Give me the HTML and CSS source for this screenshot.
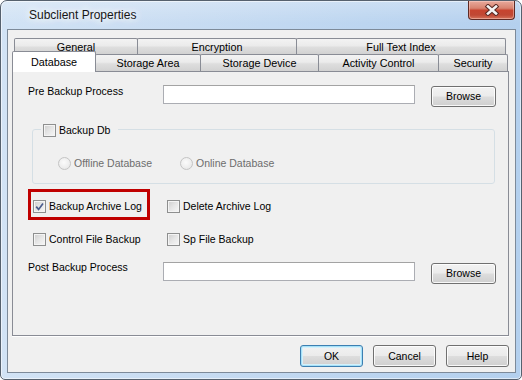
FILE: index.html
```html
<!DOCTYPE html>
<html>
<head>
<meta charset="utf-8">
<link rel="stylesheet" href="styles.css">
</head>
<body>
<div class="window">
  <div class="titlebar">
    <span class="title">Subclient Properties</span>
    <div class="close">
      <svg width="16" height="12" viewBox="0 0 16 12"><path d="M4 2.5 L12 9.5 M12 2.5 L4 9.5" stroke="#5b2a24" stroke-width="4.6" stroke-linecap="square" fill="none"/><path d="M4 2.5 L12 9.5 M12 2.5 L4 9.5" stroke="#f4f4f4" stroke-width="2.6" stroke-linecap="square" fill="none"/></svg>
    </div>
  </div>
  <div class="client">
    <div class="tabs">
      <div class="tabrow back">
        <div class="tab t-general">General</div>
        <div class="tab t-encryption">Encryption</div>
        <div class="tab t-fti">Full Text Index</div>
      </div>
      <div class="tabrow front">
        <div class="tab sel t-database">Database</div>
        <div class="tab t-sarea">Storage Area</div>
        <div class="tab t-sdevice">Storage Device</div>
        <div class="tab t-activity">Activity Control</div>
        <div class="tab t-security">Security</div>
      </div>
    </div>
    <div class="panel">
      <div class="row row1">
        <span class="lbl">Pre Backup Process</span>
        <span class="tb"></span>
        <span class="btn">Browse</span>
      </div>
      <div class="group">
        <div class="legend"><span class="cb"></span><span>Backup Db</span></div>
        <div class="radios">
          <div class="ritem"><span class="radio"></span><span>Offline Database</span></div>
          <div class="ritem"><span class="radio"></span><span>Online Database</span></div>
        </div>
      </div>
      <div class="cbrow rowa">
        <div class="citem highlight"><span class="cb"><svg width="9" height="9" viewBox="0 0 9 9"><path d="M1.2 4.6 L3.6 7.4 L8 1.4" stroke="#4b5d8e" stroke-width="1.7" fill="none"/></svg></span><span>Backup Archive Log</span></div>
        <div class="citem"><span class="cb"></span><span>Delete Archive Log</span></div>
      </div>
      <div class="cbrow rowb">
        <div class="citem"><span class="cb"></span><span>Control File Backup</span></div>
        <div class="citem"><span class="cb"></span><span>Sp File Backup</span></div>
      </div>
      <div class="row row2">
        <span class="lbl">Post Backup Process</span>
        <span class="tb"></span>
        <span class="btn">Browse</span>
      </div>
    </div>
    <div class="buttons">
      <span class="btn dlg default">OK</span>
      <span class="btn dlg">Cancel</span>
      <span class="btn dlg">Help</span>
    </div>
  </div>
</div>
</body>
</html>
```
FILE: styles.css
```css
html, body {
  margin: 0;
  padding: 0;
}
body {
  font-family: "Liberation Sans", Arial, sans-serif;
  font-size: 10.5px;
  color: #000;
  width: 522px;
  height: 380px;
  overflow: hidden;
}
.window {
  width: 522px;
  height: 380px;
  box-sizing: border-box;
  border: 1px solid #56616e;
  border-radius: 7px 7px 5px 5px;
  background: linear-gradient(to right, #d2e3f5 0%, #c8dcf2 35%, #bcd5f0 70%, #b4d0ee 100%);
  box-shadow: inset 0 0 0 1px rgba(255,255,255,0.55);
  display: flex;
  flex-direction: column;
  overflow: hidden;
}
.titlebar {
  height: 28px;
  flex: none;
  display: flex;
  align-items: center;
  padding-left: 28px;
  background: linear-gradient(to bottom, rgba(255,255,255,0.25), rgba(255,255,255,0) 80%);
}
.title {
  font-size: 12px;
  color: #161616;
  text-shadow: 0 0 6px #fff, 0 0 10px #fff, 0 0 14px #eaf3fc;
}
.close {
  margin-left: auto;
  margin-right: 6px;
  align-self: flex-start;
  width: 47px;
  height: 19px;
  box-sizing: border-box;
  border: 1px solid #5e2a24;
  border-top: none;
  border-radius: 0 0 4px 4px;
  background: linear-gradient(to bottom, #e9aa9c 0%, #d88370 40%, #c7442f 52%, #c04834 78%, #d5735b 100%);
  box-shadow: inset 0 0 0 1px rgba(255,220,210,0.45);
  display: flex;
  align-items: center;
  justify-content: center;
}
.client {
  flex: 1;
  margin: 0 5px 6px 6px;
  border: 1px solid #7d8a99;
  background: #f0f0f0;
  padding: 8px 6px 0 4px;
  display: flex;
  flex-direction: column;
}
.tabs {
  position: relative;
  z-index: 1;
}
.tabrow {
  display: flex;
  align-items: flex-start;
}
.back {
  margin-left: 2px;
  height: 16px;
}
.front {
  margin-top: -3px;
  height: 20px;
}
.tab {
  box-sizing: border-box;
  border: 1px solid #898c95;
  border-bottom: none;
  border-radius: 2px 2px 0 0;
  text-align: center;
  line-height: 14px;
  font-size: 10.8px;
  white-space: nowrap;
  background: linear-gradient(to bottom, #f3f3f3 0%, #ebebeb 45%, #dedede 55%, #d2d2d2 100%);
}
.tab + .tab {
  margin-left: -1px;
}
.back .tab {
  height: 16px;
  padding-top: 1px;
}
.front .tab {
  margin-top: 3px;
  height: 17px;
  padding-top: 1px;
}
.front .tab.sel {
  margin-top: 0;
  height: 21px;
  padding-top: 3px;
  background: #fff;
}
.t-general { width: 124px; }
.t-encryption { width: 160px; }
.t-fti { width: 210px; }
.t-database { width: 84px; }
.t-sarea { width: 106px; }
.t-sdevice { width: 119px; }
.t-activity { width: 121px; }
.t-security { width: 70px; }

.panel {
  height: 265px;
  box-sizing: border-box;
  border: 1px solid #898c95;
  background: #f0f0f0;
  box-shadow: 0 1px 0 #ffffff;
  display: flex;
  flex-direction: column;
  flex: none;
}
.row {
  display: flex;
  align-items: flex-start;
  padding-left: 15px;
}
.row1 {
  margin-top: 13px;
}
.row2 {
  margin-top: 16px;
}
.lbl {
  width: 135px;
  line-height: 13px;
}
.row2 .lbl {
  margin-top: -1px;
}
.tb {
  width: 252px;
  height: 19px;
  box-sizing: border-box;
  border: 1px solid #abadb3;
  border-top-color: #a3a3a3;
  background: #fff;
}
.btn {
  box-sizing: border-box;
  width: 65px;
  height: 21px;
  margin-left: 16px;
  margin-top: 1px;
  border: 1px solid #707070;
  border-radius: 3px;
  background: linear-gradient(to bottom, #f2f2f2 0%, #ebebeb 48%, #dddddd 52%, #cfcfcf 100%);
  box-shadow: inset 0 0 0 1px rgba(255,255,255,0.85);
  display: flex;
  align-items: center;
  justify-content: center;
  line-height: 13px;
}
.group {
  margin: 22px 0 0 19px;
  width: 463px;
  height: 55px;
  box-sizing: border-box;
  border: 1px solid #d5dfe5;
  border-radius: 3px;
  display: flex;
  flex-direction: column;
  flex: none;
}
.legend {
  align-self: flex-start;
  margin: -6px 0 0 8px;
  padding: 0 8px 0 2px;
  background: #f0f0f0;
  display: flex;
  align-items: center;
  gap: 3px;
  line-height: 13px;
}
.radios {
  display: flex;
  margin: 20px 0 0 25px;
}
.ritem {
  display: flex;
  align-items: center;
  gap: 3px;
  width: 122px;
  color: #6d6d6d;
  line-height: 13px;
}
.radio {
  width: 13px;
  height: 13px;
  box-sizing: border-box;
  border: 1px solid #c4c4c4;
  border-radius: 50%;
  background: radial-gradient(circle at 45% 40%, #fbfbfb 0%, #eeeeee 55%, #e2e2e2 100%);
  flex: none;
}
.cb {
  width: 13px;
  height: 13px;
  box-sizing: border-box;
  border: 1px solid #8e8f8f;
  background: linear-gradient(135deg, #cdcdcd 0%, #e6e6e6 50%, #f7f7f7 100%);
  box-shadow: inset 0 0 0 1px #f4f4f4;
  display: flex;
  align-items: center;
  justify-content: center;
  flex: none;
}
.cbrow {
  display: flex;
  padding-left: 20px;
}
.rowa {
  margin-top: 16px;
}
.rowb {
  margin-top: 20px;
}
.citem {
  display: flex;
  align-items: center;
  gap: 3px;
  width: 134px;
  line-height: 13px;
}
.highlight {
  position: relative;
}
.highlight::after {
  content: "";
  position: absolute;
  left: -5px;
  top: -11px;
  width: 122px;
  height: 31px;
  box-sizing: border-box;
  border: 3px solid #c00000;
}
.buttons {
  display: flex;
  justify-content: flex-end;
  gap: 10px;
  margin-top: 9px;
}
.btn.dlg {
  width: 63px;
  height: 22px;
  margin: 0;
}
.btn.default {
  border-color: #3c7fb1;
  box-shadow: inset 0 0 0 1px #a6e1f8, inset 0 0 0 2px #d4f0fb;
}
```
